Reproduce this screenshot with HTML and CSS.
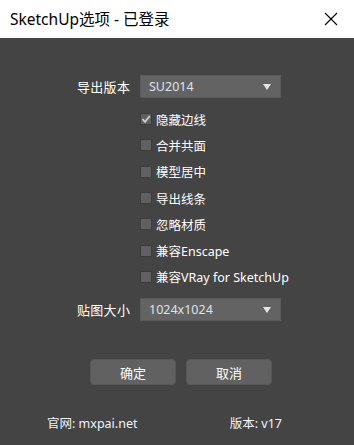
FILE: index.html
```html
<!DOCTYPE html>
<html lang="zh-CN">
<head>
  <meta charset="UTF-8">
  <title>SketchUp选项 - 已登录</title>
  <link rel="stylesheet" href="styles.css">
</head>
<body>
  <div class="window">
    <div class="titlebar">
      <span class="title">SketchUp选项 - 已登录</span>
      <svg class="close" width="14" height="14" viewBox="0 0 14 14">
        <path d="M1 1 L13 13 M13 1 L1 13" stroke="#000" stroke-width="1.1" fill="none"/>
      </svg>
    </div>
    <div class="content">
      <div class="field">
        <label class="label">导出版本</label>
        <div class="select">
          <span>SU2014</span>
          <span class="arrow"></span>
        </div>
      </div>
      <div class="checks">
        <div class="check-row">
          <span class="box checked">
            <svg width="10" height="10" viewBox="0 0 10 10"><path d="M1.5 5.2 L4 7.8 L8.8 2" stroke="#cfcfcf" stroke-width="1.8" fill="none"/></svg>
          </span>
          <span>隐藏边线</span>
        </div>
        <div class="check-row"><span class="box"></span><span>合并共面</span></div>
        <div class="check-row"><span class="box"></span><span>模型居中</span></div>
        <div class="check-row"><span class="box"></span><span>导出线条</span></div>
        <div class="check-row"><span class="box"></span><span>忽略材质</span></div>
        <div class="check-row"><span class="box"></span><span>兼容Enscape</span></div>
        <div class="check-row"><span class="box"></span><span>兼容VRay for SketchUp</span></div>
      </div>
      <div class="field field-size">
        <label class="label">贴图大小</label>
        <div class="select">
          <span>1024x1024</span>
          <span class="arrow"></span>
        </div>
      </div>
      <div class="buttons">
        <button class="btn">确定</button>
        <button class="btn">取消</button>
      </div>
      <div class="footer">
        <span class="site">官网: mxpai.net</span>
        <span class="version">版本: v17</span>
      </div>
    </div>
  </div>
</body>
</html>
```

FILE: styles.css
```css
body {
  margin: 0;
  font-family: "Noto Sans", "Noto Sans CJK SC", sans-serif;
  background: #444444;
}
.window {
  width: 354px;
  height: 445px;
  display: flex;
  flex-direction: column;
  background: #444444;
}
.titlebar {
  height: 38px;
  background: #ffffff;
  display: flex;
  align-items: center;
  justify-content: space-between;
  padding: 0 16px 0 10px;
  box-sizing: border-box;
}
.title {
  font-size: 15.5px;
  color: #000;
  padding-bottom: 2px;
}
.close {
  display: block;
}
.content {
  padding: 37px 0 0 77px;
  display: flex;
  flex-direction: column;
  color: #ffffff;
  font-size: 13px;
}
.field {
  display: flex;
  align-items: center;
  height: 23px;
}
.label {
  width: 63px;
  font-size: 13px;
  letter-spacing: 0.3px;
}
.select {
  width: 141px;
  height: 23px;
  box-sizing: border-box;
  background: #636363;
  border: 1px solid #5a5a5a;
  display: flex;
  align-items: center;
  justify-content: space-between;
  padding: 0 9px 0 8px;
  color: #dfe3e8;
  font-size: 12.5px;
}
.arrow {
  width: 0;
  height: 0;
  border-left: 4px solid transparent;
  border-right: 4px solid transparent;
  border-top: 6px solid #e6e6e6;
}
.checks {
  margin: 8px 0 0 63px;
  display: flex;
  flex-direction: column;
}
.check-row {
  height: 26.3px;
  display: flex;
  align-items: center;
  gap: 4px;
  font-size: 12.5px;
}
.box {
  width: 12px;
  height: 12px;
  box-sizing: border-box;
  background: #606060;
  border: 1px solid #3c3c3c;
  display: flex;
  align-items: center;
  justify-content: center;
}
.field-size {
  margin-top: 8px;
}
.buttons {
  margin: 38px 0 0 13px;
  display: flex;
  gap: 10px;
}
.btn {
  width: 86px;
  height: 26px;
  background: #616161;
  border: 1px solid #575757;
  border-radius: 4px;
  color: #ffffff;
  font-family: inherit;
  font-size: 13px;
  padding: 0;
}
.footer {
  margin: 27px 0 0 -30px;
  width: 235px;
  height: 20px;
  display: flex;
  align-items: center;
  justify-content: space-between;
  font-size: 12.5px;
  color: #f0f4f8;
}
```
